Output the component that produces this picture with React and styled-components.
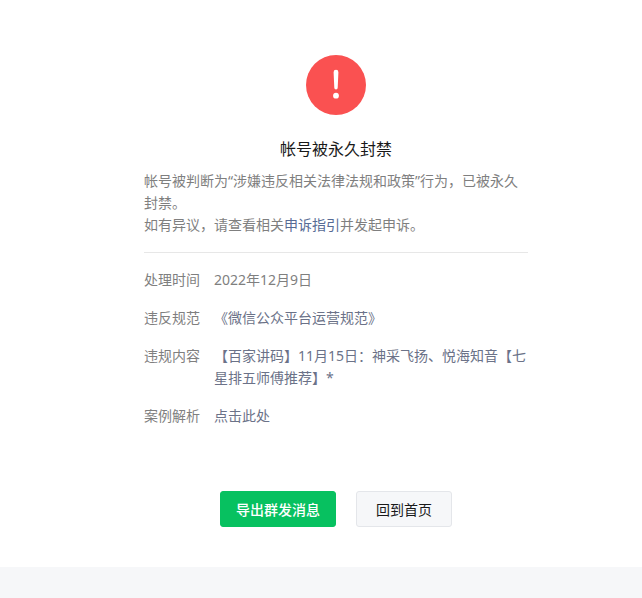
import React from 'react'
import styled, { createGlobalStyle } from 'styled-components'

const GlobalStyle = createGlobalStyle`
    html, body {
        margin: 0;
        padding: 0;
        background: #f6f7f9;
    }
    body {
        font-family: "Noto Sans", "Noto Sans CJK SC", sans-serif;
        font-size: 14px;
    }
`

const Page = styled.div`
    min-height: 598px;
    display: flex;
    flex-direction: column;
`

const Panel = styled.main`
    background: #fff;
    height: 567px;
    box-sizing: border-box;
    padding: 55px 0 0 30px;
    display: flex;
    flex-direction: column;
    align-items: center;
`

const AlertIcon = styled.svg`
    display: block;
    width: 60px;
    height: 60px;
`

const Title = styled.h2`
    margin: 23px 0 0;
    font-size: 16px;
    font-weight: 400;
    line-height: 22px;
    color: #191919;
    text-align: center;
`

const Content = styled.div`
    width: 384px;
    margin-top: 10px;
`

const Desc = styled.p`
    margin: 0;
    padding-bottom: 16px;
    line-height: 22px;
    color: #7f7f7f;
    border-bottom: 1px solid #e7e7e7;
`

const Link = styled.a`
    color: ${props => props.$muted ? '#6b7288' : '#576b95'};
    text-decoration: none;
`

const Details = styled.dl`
    margin: 16px 0 0;
    display: flex;
    flex-direction: column;
    gap: 16px;
`

const Row = styled.div`
    display: flex;
    line-height: 22px;
`

const Label = styled.dt`
    flex: 0 0 70px;
    color: #7f7f7f;
`

const Value = styled.dd`
    margin: 0;
    flex: 1;
    color: #7f7f7f;
`

const Actions = styled.div`
    display: flex;
    gap: 20px;
    margin-top: 64px;
`

const Button = styled.button`
    box-sizing: border-box;
    height: 36px;
    width: ${props => props.$primary ? '116px' : '96px'};
    padding: 0;
    border-radius: 3px;
    border: 1px solid ${props => props.$primary ? '#07c160' : '#e4e6ea'};
    background: ${props => props.$primary ? '#07c160' : '#f6f7f9'};
    color: ${props => props.$primary ? '#fff' : '#191919'};
    font-family: inherit;
    font-size: 14px;
    font-weight: ${props => props.$primary ? 500 : 400};
`

function App() {
    return (
        <Page>
            <GlobalStyle />
            <Panel>
                <AlertIcon viewBox="0 0 60 60">
                    <circle cx="30" cy="30" r="30" fill="#fa5151" />
                    <path d="M27.6 17.2a2.4 2.4 0 0 1 4.8 0l-.7 15.6a1.7 1.7 0 0 1-3.4 0z" fill="#fff" />
                    <circle cx="30" cy="40.7" r="2.9" fill="#fff" />
                </AlertIcon>
                <Title>帐号被永久封禁</Title>
                <Content>
                    <Desc>
                        帐号被判断为“涉嫌违反相关法律法规和政策”行为，已被永久封禁。<br />
                        如有异议，请查看相关<Link href="#">申诉指引</Link>并发起申诉。
                    </Desc>
                    <Details>
                        <Row>
                            <Label>处理时间</Label>
                            <Value>2022年12月9日</Value>
                        </Row>
                        <Row>
                            <Label>违反规范</Label>
                            <Value><Link href="#" $muted>《微信公众平台运营规范》</Link></Value>
                        </Row>
                        <Row>
                            <Label>违规内容</Label>
                            <Value><Link href="#" $muted>【百家讲码】11月15日：神采飞扬、悦海知音【七星排五师傅推荐】*</Link></Value>
                        </Row>
                        <Row>
                            <Label>案例解析</Label>
                            <Value><Link href="#" $muted>点击此处</Link></Value>
                        </Row>
                    </Details>
                </Content>
                <Actions>
                    <Button $primary>导出群发消息</Button>
                    <Button>回到首页</Button>
                </Actions>
            </Panel>
        </Page>
    )
}

export default App
